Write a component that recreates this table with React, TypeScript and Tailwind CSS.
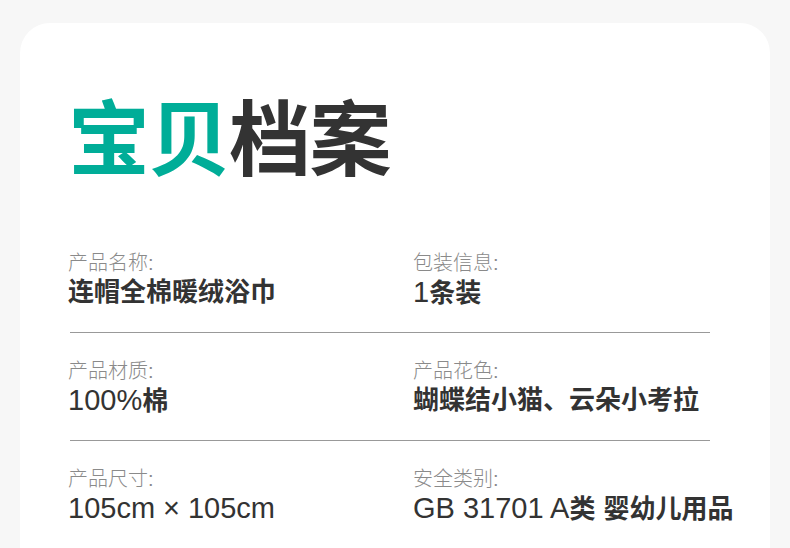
import type { ReactNode } from 'react';

// latin runs are set bigger than the CJK ones, like the source image
const L = ({ children }: { children: ReactNode }) => (
  <span className="text-[29px] font-normal">{children}</span>
);

const rows: { label: string; value: ReactNode }[][] = [
  [
    { label: '产品名称:', value: <>连帽全棉暖绒浴巾</> },
    { label: '包装信息:', value: <><L>1</L>条装</> },
  ],
  [
    { label: '产品材质:', value: <><L>100%</L>棉</> },
    { label: '产品花色:', value: <>蝴蝶结小猫、云朵小考拉</> },
  ],
  [
    { label: '产品尺寸:', value: <><L>105cm</L><span className="text-[29px] font-normal mx-[8px]">×</span><L>105cm</L></> },
    { label: '安全类别:', value: <><L>GB 31701 A</L>类<L> </L>婴幼儿用品</> },
  ],
];

const font = { fontFamily: '"Liberation Sans", "Noto Sans CJK SC", sans-serif' };

export default function App() {
  return (
    <div className="w-[790px] h-[548px] overflow-hidden bg-[#f7f7f7] px-[20px] pt-[23px]" style={font}>
      <div className="bg-white rounded-t-[30px] h-[600px] pl-[48px] pr-[12px] pt-[77px]">
        <h1 className="text-[82px] leading-none font-bold tracking-[-1.5px]">
          <span className="text-[#00ad98]">宝贝</span>
          <span className="text-[#333333]">档案</span>
        </h1>

        <div className="mt-[69px]">
          {rows.map((row, i) => (
            <div key={i}>
              <div className="grid grid-cols-2">
                {row.map((item) => (
                  <div key={item.label} className="flex flex-col">
                    <span className="text-[20px] leading-[24px] text-[#8a8a8a] font-light">{item.label}</span>
                    <span className="text-[26px] leading-[34px] h-[34px] text-[#333333] font-semibold whitespace-nowrap">
                      {item.value}
                    </span>
                  </div>
                ))}
              </div>
              {i < rows.length - 1 && (
                <div className="ml-[2px] w-[640px] h-px bg-[#999999] mt-[23px] mb-[26px]" />
              )}
            </div>
          ))}
        </div>
      </div>
    </div>
  );
}
